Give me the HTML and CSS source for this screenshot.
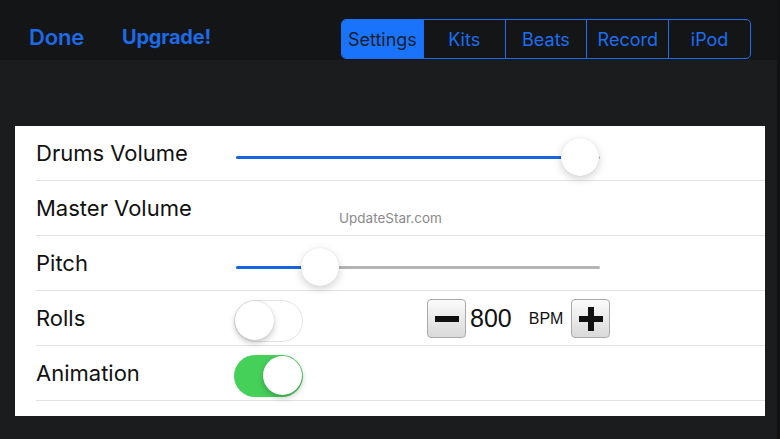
FILE: index.html
```html
<!DOCTYPE html>
<html>
<head>
<meta charset="utf-8">
<link rel="stylesheet" href="styles.css">
</head>
<body>
<div class="screen">
  <header class="topbar">
    <a class="nav-btn">Done</a>
    <a class="nav-btn upgrade">Upgrade!</a>
    <nav class="segmented">
      <span class="seg active">Settings</span>
      <span class="seg">Kits</span>
      <span class="seg">Beats</span>
      <span class="seg">Record</span>
      <span class="seg">iPod</span>
    </nav>
  </header>
  <main class="panel">
    <div class="row">
      <span class="label">Drums Volume</span>
      <div class="slider"><div class="fill" style="width:344px"></div><div class="thumb" style="left:325px"></div></div>
    </div>
    <div class="row">
      <span class="label">Master Volume</span>
      <span class="watermark">UpdateStar.com</span>
    </div>
    <div class="row">
      <span class="label">Pitch</span>
      <div class="slider"><div class="fill" style="width:84px"></div><div class="thumb" style="left:65px"></div></div>
    </div>
    <div class="row">
      <span class="label">Rolls</span>
      <div class="toggle off"><div class="knob"></div></div>
      <div class="stepper">
        <button class="step-btn"><svg width="26" height="26" viewBox="0 0 26 26"><rect x="1" y="10" width="24" height="6" fill="#111"/></svg></button>
        <span class="bpm-value">800</span>
        <span class="bpm-unit">BPM</span>
        <button class="step-btn"><svg width="26" height="26" viewBox="0 0 26 26"><rect x="1" y="10" width="24" height="6" fill="#111"/><rect x="10" y="1" width="6" height="24" fill="#111"/></svg></button>
      </div>
    </div>
    <div class="row">
      <span class="label">Animation</span>
      <div class="toggle on"><div class="knob"></div></div>
    </div>
    <div class="row last"></div>
  </main>
</div>
</body>
</html>
```
FILE: styles.css
```css
* { box-sizing: border-box; }
html, body {
  margin: 0;
  padding: 0;
  background: #1b1c1e;
  overflow: hidden;
}
.screen {
  width: 780px;
  height: 439px;
  background: #1b1c1e;
  font-family: Inter, "Liberation Sans", sans-serif;
  position: relative;
  border-right: 3px solid #111213;
}
.topbar {
  height: 60px;
  background: #141516;
  display: flex;
  align-items: center;
  padding: 16px 26px 0 29px;
}
.nav-btn {
  color: #1d6ae6;
  font-weight: 600;
  font-size: 22px;
  margin-right: 38px;
  letter-spacing: -0.2px;
  padding-bottom: 2px;
}
.nav-btn.upgrade {
  font-size: 20px;
  font-weight: 700;
}
.segmented {
  margin-left: auto;
  display: flex;
  width: 410px;
  height: 40px;
  margin-top: 2px;
  border: 1.5px solid #1a6ef2;
  border-radius: 5px;
  overflow: hidden;
}
.seg {
  flex: 1;
  display: flex;
  align-items: center;
  justify-content: center;
  color: #1a6ef2;
  font-size: 18px;
  border-left: 1.5px solid #1a6ef2;
}
.seg:first-child { border-left: none; }
.seg.active {
  background: #1a74fb;
  color: #17202c;
}
.panel {
  margin: 66px 0 0 15px;
  width: 750px;
  height: 290px;
  background: #fff;
  overflow: hidden;
  position: relative;
}
.row {
  height: 55px;
  margin-left: 21px;
  border-bottom: 1px solid #e2e2e2;
  display: flex;
  align-items: center;
  position: relative;
}
.label {
  width: 200px;
  font-size: 22px;
  color: #111;
  padding-bottom: 1px;
}
.slider {
  position: relative;
  width: 364px;
  height: 3px;
  background: #b4b4b4;
  border-radius: 2px;
  margin-top: 8px;
}
.fill {
  position: absolute;
  left: 0;
  top: 0;
  height: 3px;
  background: #1766e0;
  border-radius: 2px;
}
.thumb {
  position: absolute;
  top: -18px;
  width: 38px;
  height: 38px;
  border-radius: 50%;
  background: #fff;
  box-shadow: 0 3px 8px rgba(0,0,0,0.18), 0 0 1px rgba(0,0,0,0.15);
}
.watermark {
  position: absolute;
  left: 303px;
  top: 29px;
  font-size: 13.5px;
  color: #8a8a8a;
}
.toggle {
  width: 69px;
  height: 42px;
  border-radius: 21px;
  position: relative;
  margin-left: -2px;
  margin-top: 6px;
}
.toggle.off {
  background: #fff;
  border: 1.5px solid #e3e3e3;
}
.toggle.on {
  background: #45d05a;
}
.knob {
  position: absolute;
  top: 1px;
  width: 39px;
  height: 39px;
  border-radius: 50%;
  background: #fff;
  box-shadow: 0 3px 6px rgba(0,0,0,0.22), 0 0 1px rgba(0,0,0,0.2);
}
.toggle.off .knob { left: 0; top: 0; }
.toggle.on .knob { right: 1px; }
.stepper {
  display: flex;
  align-items: center;
  margin-left: 124px;
  margin-top: 1px;
}
.step-btn {
  width: 39px;
  height: 39px;
  padding: 0;
  border: 1px solid #a9a9a9;
  border-radius: 4px;
  background: linear-gradient(#fbfbfb, #d9d9d9);
  display: flex;
  align-items: center;
  justify-content: center;
}
.bpm-value {
  font-family: "Liberation Sans", sans-serif;
  font-size: 25px;
  color: #111;
  margin: 0 17px 0 4px;
}
.bpm-unit {
  font-family: "Liberation Sans", sans-serif;
  font-size: 16px;
  color: #111;
  margin-right: 8px;
}
.row.last { border-bottom: none; }
```
